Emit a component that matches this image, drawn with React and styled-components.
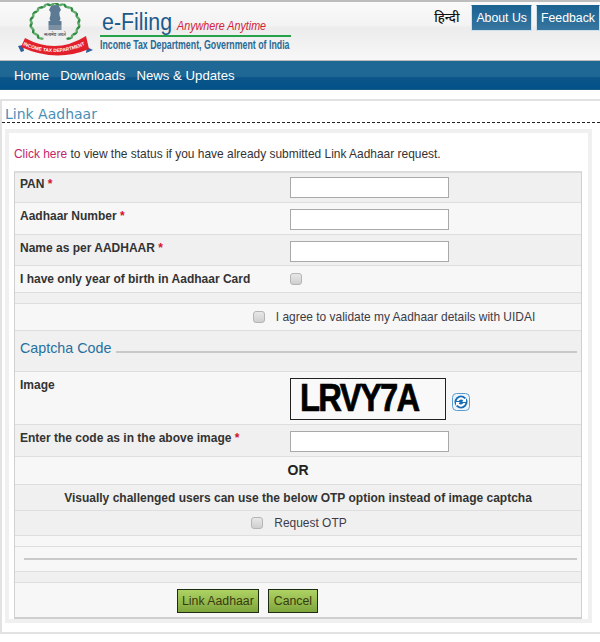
import React from "react";
import styled, { createGlobalStyle } from "styled-components";

const GlobalStyle = createGlobalStyle`
  html, body {
    margin: 0;
    padding: 0;
    background: #fff;
  }
  body {
    font-family: "Liberation Sans", Arial, sans-serif;
    font-size: 12px;
    color: #333;
  }
  * { box-sizing: border-box; }
`;

const Page = styled.div`
  width: 600px;
  height: 642px;
  overflow: hidden;
`;

const Header = styled.header`
  height: 61px;
  border-top: 2px solid #bdbdbd;
  border-bottom: 1px solid #bcbcbc;
  background: linear-gradient(#fafafa 0%, #f3f3f3 40%, #ececec 45%, #f7f7f7 100%);
  display: flex;
  align-items: flex-start;
`;

const LogoBox = styled.div`
  width: 100px;
  padding: 1px 0 0 18px;
  flex: none;
`;

const Brand = styled.div`
  width: 191px;
  padding-top: 7px;
  flex: none;
`;

const BrandTop = styled.div`
  display: flex;
  align-items: baseline;
  height: 26px;
  padding-left: 2px;
  white-space: nowrap;
`;

const BrandName = styled.span`
  font-size: 23px;
  line-height: 26px;
  color: #1c5a8c;
  display: inline-block;
  width: 75px;
  transform: scaleX(0.93);
  transform-origin: left;
`;

const Tagline = styled.span`
  font-style: italic;
  font-size: 13.5px;
  color: #d3203a;
  display: inline-block;
  transform: scaleX(0.795);
  transform-origin: left;
`;

const BrandBar = styled.div`
  height: 2px;
  background: #27a14a;
`;

const BrandDept = styled.div`
  font-weight: 700;
  font-size: 12px;
  line-height: 15px;
  margin-top: 1px;
  color: #2a6a96;
  white-space: nowrap;
  transform: scaleX(0.733);
  transform-origin: left;
`;

const TopLinks = styled.div`
  margin-left: auto;
  display: flex;
  align-items: flex-start;
  padding-top: 3px;
`;

const Hindi = styled.span`
  font-family: "Noto Sans", "Liberation Sans", sans-serif;
  font-size: 13px;
  font-weight: 500;
  line-height: 24px;
  color: #111;
  margin-right: 12px;
`;

const TopButton = styled.a`
  height: 26px;
  line-height: 24px;
  margin-left: ${(p) => p.$gap}px;
  padding: 0 ${(p) => p.$pad}px;
  font-size: 12.3px;
  color: #fff;
  background: linear-gradient(#1c6392, #37769f);
  border: 1px solid #cfe0ea;
  border-top-color: #1c6392;
`;

const Nav = styled.nav`
  height: 29px;
  background: linear-gradient(#1f6794 0%, #1f6794 55%, #0a5488 60%, #02528a 100%);
  display: flex;
  align-items: center;
  padding: 0 0 0 14px;
  gap: 11px;
  border-bottom: 1px solid #1a5c86;
`;

const NavLink = styled.a`
  font-size: 13.2px;
  color: #fff;
`;

const Card = styled.main`
  margin-top: 9px;
  height: 535px;
  border: 2px solid #e2e2e2;
  border-right: none;
`;

const TitleBar = styled.div`
  height: 22px;
  border-bottom: 1px dashed #222;
  padding: 4px 0 0 3px;
`;

const Title = styled.h1`
  margin: 0;
  font-family: "DejaVu Sans", sans-serif;
  font-weight: 400;
  font-size: 14px;
  line-height: 18px;
  color: #4a90b8;
`;

const Panel = styled.section`
  margin: 6px 8px 0 3px;
  height: 494px;
  border: 4px solid #f0f0f0;
  padding: 14px 6px 0 5px;
  background: #fff;
`;

const Intro = styled.p`
  margin: 0 0 10px;
  line-height: 14px;
  font-size: 11.95px;
  color: #333;
  a { color: #c4266b; }
`;

const Table = styled.div`
  border: 1px solid #d0d0d0;
  border-top: 2px solid #dcdcdc;
  border-bottom: 2px solid #cfcfcf;
`;

const Row = styled.div`
  height: ${(p) => p.$h}px;
  background: ${(p) => (p.$alt ? "#f0f0f0" : "#f7f7f7")};
  border-bottom: 1px solid #dedede;
  &:last-child { border-bottom: none; }
`;

const FieldRow = styled(Row)`
  display: grid;
  grid-template-columns: 270px 1fr;
  padding: ${(p) => p.$pt ?? 6}px 0 0 5px;
`;

const Label = styled.label`
  font-weight: 700;
  font-size: 12px;
  line-height: 14px;
  color: #333;
`;

const Star = styled.span`
  color: #d2122e;
`;

const TextInput = styled.input`
  display: block;
  width: 159px;
  height: 21px;
  background: #fff;
  border: 1px solid #a9a9a9;
  padding: 0;
`;

const Check = styled.input.attrs({ type: "checkbox" })`
  appearance: none;
  display: block;
  width: 12px;
  height: 12px;
  margin: ${(p) => p.$mt ?? 0}px 0 0;
  border: 1px solid #b5b5b5;
  border-radius: 3px;
  background: linear-gradient(#e8e8e8, #cfcfcf);
`;

const CenterRow = styled(Row)`
  display: flex;
  justify-content: center;
  align-items: center;
  gap: 11px;
  padding-left: ${(p) => p.$shift ?? 0}px;
  padding-bottom: ${(p) => p.$pb ?? 0}px;
  font-size: 11.95px;
  color: #3c3c48;
`;

const OrText = styled.span`
  font-size: 14px;
  font-weight: 700;
  color: #222;
`;

const Notice = styled.span`
  font-weight: 700;
  font-size: 12px;
  color: #333;
`;

const SectionRow = styled(Row)`
  display: flex;
  align-items: center;
  gap: 5px;
  padding: 0 4px 6px 5px;
`;

const SectionTitle = styled.span`
  font-size: 14.3px;
  color: #26709f;
`;

const Rule = styled.div`
  flex: 1;
  height: 2px;
  margin-top: ${(p) => p.$mt}px;
  background: #c9c9c9;
`;

const RuleRow = styled(Row)`
  display: flex;
  align-items: center;
  padding: 0 4px 0 9px;
`;

const CaptchaCell = styled.div`
  display: flex;
  align-items: flex-start;
  gap: 6px;
  svg { margin-top: 15px; }
`;

const CaptchaBox = styled.div`
  width: 156px;
  height: 42px;
  border: 1px solid #222;
  background: #f9f9f9;
  padding-left: 9px;
  white-space: nowrap;
`;

const CaptchaText = styled.span`
  display: inline-block;
  font-weight: 700;
  font-size: 39px;
  line-height: 38px;
  letter-spacing: -2px;
  color: #000;
  -webkit-text-stroke: 0.7px #000;
  transform: scaleX(0.84);
  transform-origin: left;
`;

const ButtonRow = styled(Row)`
  display: flex;
  gap: 9px;
  padding: 6px 0 0 162px;
`;

const GreenButton = styled.button`
  height: 24px;
  padding: 0 ${(p) => p.$pad}px;
  font-family: "Liberation Sans", sans-serif;
  font-size: 12.3px;
  color: #3a3a10;
  background: linear-gradient(#aed364, #7ea53c);
  border: 1px solid #1f2a12;
  border-radius: 0;
`;

// wreath leaves round the emblem, open at the bottom
const leaves = Array.from({ length: 30 }, (_, i) => {
  const deg = 125 + i * 10;
  const a = (deg * Math.PI) / 180;
  return { x: 37 + 24 * Math.cos(a), y: 20 + 19 * Math.sin(a), rot: deg + 90 + (i % 2 ? 30 : -30) };
});

const Logo = () => (
  <svg width="75" height="55" viewBox="0 0 75 55">
    <g>
      {leaves.map((l, i) => (
        <ellipse
          key={i}
          cx={l.x}
          cy={l.y}
          rx="2.6"
          ry="1.3"
          fill={i % 2 ? "#2f8a45" : "#62ad6b"}
          transform={`rotate(${l.rot} ${l.x} ${l.y})`}
        />
      ))}
    </g>
    <path d="M33 3 q4 -2 8 0 l2 4 -1.5 2 v3 l1 4 -1 2 h2 v4 h-13 v-4 h2 l-1 -2 1 -4 v-3 l-1.5 -2z" fill="#5d7a94" />
    <rect x="30.5" y="22" width="13" height="5" fill="#7d90a3" />
    <text x="37" y="33" textAnchor="middle" fontFamily="Noto Sans, sans-serif" fontSize="4.5" fill="#222">सत्यमेव जयते</text>
    <path d="M0 43 l5 -1 1 6 -3 1z M75 47 l-6 -3 -1 6z" fill="#2d5d9b" />
    <path d="M7 35 Q38 52 68 33 L71 46 Q38 60 3 44 Z" fill="#e2202c" />
    <path id="bannerCurve" d="M5 42 Q38 57 71 40" fill="none" />
    <text fontFamily="Liberation Sans, sans-serif" fontSize="4.8" fontWeight="700" fill="#fff">
      <textPath href="#bannerCurve">INCOME TAX DEPARTMENT</textPath>
    </text>
  </svg>
);

const RefreshIcon = () => (
  <svg width="18" height="18" viewBox="0 0 18 18">
    <rect x="0.5" y="0.5" width="17" height="17" rx="4" fill="#eef5fb" stroke="#5b9bd0" />
    <circle cx="9" cy="9" r="6.5" fill="#1a6cb3" />
    <path d="M4.5 8 a4.6 4.6 0 0 1 8 -2 l1.5 -1 v4 h-4 l1.3 -1.3 a2.6 2.6 0 0 0 -4.6 .3z" fill="#fff" />
    <path d="M13.5 10 a4.6 4.6 0 0 1 -8 2 l-1.5 1 v-4 h4 l-1.3 1.3 a2.6 2.6 0 0 0 4.6 -.3z" fill="#fff" />
  </svg>
);

const fields = [
  { label: "PAN", h: 30, alt: true, pt: 4 },
  { label: "Aadhaar Number", h: 32 },
  { label: "Name as per AADHAAR", h: 31, alt: true },
];

export default function App() {
  return (
    <Page>
      <GlobalStyle />
      <Header>
        <LogoBox>
          <Logo />
        </LogoBox>
        <Brand>
          <BrandTop>
            <BrandName>e-Filing</BrandName>
            <Tagline>Anywhere Anytime</Tagline>
          </BrandTop>
          <BrandBar />
          <BrandDept>Income Tax Department, Government of India</BrandDept>
        </Brand>
        <TopLinks>
          <Hindi>हिन्दी</Hindi>
          <TopButton $gap={0} $pad={4}>About Us</TopButton>
          <TopButton $gap={4} $pad={4}>Feedback</TopButton>
        </TopLinks>
      </Header>
      <Nav>
        <NavLink>Home</NavLink>
        <NavLink>Downloads</NavLink>
        <NavLink>News &amp; Updates</NavLink>
      </Nav>
      <Card>
        <TitleBar>
          <Title>Link Aadhaar</Title>
        </TitleBar>
        <Panel>
          <Intro>
            <a>Click here</a> to view the status if you have already submitted Link Aadhaar request.
          </Intro>
          <Table>
            {fields.map((f) => (
              <FieldRow key={f.label} $h={f.h} $alt={f.alt} $pt={f.pt}>
                <Label>
                  {f.label} <Star>*</Star>
                </Label>
                <TextInput />
              </FieldRow>
            ))}
            <FieldRow $h={27}>
              <Label>I have only year of birth in Aadhaar Card</Label>
              <Check $mt={1} />
            </FieldRow>
            <Row $h={11} $alt />
            <CenterRow $h={27} $shift={192}>
              <Check />
              I agree to validate my Aadhaar details with UIDAI
            </CenterRow>
            <SectionRow $h={41} $alt>
              <SectionTitle>Captcha Code</SectionTitle>
              <Rule $mt={7} />
            </SectionRow>
            <FieldRow $h={53}>
              <Label>Image</Label>
              <CaptchaCell>
                <CaptchaBox>
                  <CaptchaText>LRVY7A</CaptchaText>
                </CaptchaBox>
                <RefreshIcon />
              </CaptchaCell>
            </FieldRow>
            <FieldRow $h={32} $alt>
              <Label>
                Enter the code as in the above image <Star>*</Star>
              </Label>
              <TextInput />
            </FieldRow>
            <CenterRow $h={28} $pb={2}>
              <OrText>OR</OrText>
            </CenterRow>
            <CenterRow $h={26} $alt>
              <Notice>Visually challenged users can use the below OTP option instead of image captcha</Notice>
            </CenterRow>
            <CenterRow $h={25} $alt $shift={2}>
              <Check />
              Request OTP
            </CenterRow>
            <Row $h={11} />
            <RuleRow $h={25}>
              <Rule $mt={0} />
            </RuleRow>
            <Row $h={11} $alt />
            <ButtonRow $h={34}>
              <GreenButton $pad={4}>Link Aadhaar</GreenButton>
              <GreenButton $pad={5}>Cancel</GreenButton>
            </ButtonRow>
          </Table>
        </Panel>
      </Card>
    </Page>
  );
}
